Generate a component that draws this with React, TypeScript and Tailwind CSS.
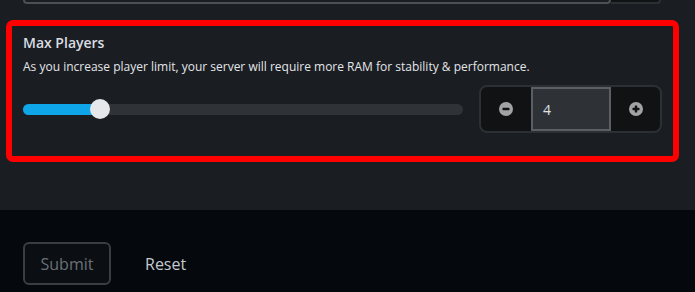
function MinusIcon() {
  return (
    <svg width="14" height="14" viewBox="0 0 14 14">
      <circle cx="7" cy="7" r="7" fill="#a3a3a3" />
      <rect x="3.5" y="5.8" width="7" height="2.4" rx="0.6" fill="#111214" />
    </svg>
  );
}

function PlusIcon() {
  return (
    <svg width="14" height="14" viewBox="0 0 14 14">
      <circle cx="7" cy="7" r="7" fill="#a3a3a3" />
      <rect x="3.5" y="5.8" width="7" height="2.4" rx="0.6" fill="#111214" />
      <rect x="5.8" y="3.5" width="2.4" height="7" rx="0.6" fill="#111214" />
    </svg>
  );
}

export default function App() {
  const value = 4;
  const pct = 17.5;

  return (
    <div
      className="w-[695px] h-[292px] overflow-hidden bg-[#05080c]"
      style={{ fontFamily: '"Open Sans", "Noto Sans", sans-serif' }}
    >
      <div className="h-[210px] bg-[#1a1d21] pt-0">
        {/* bottom edge of the field above */}
        <div className="flex pl-[23px]">
          <div className="w-[588px] h-[4px] border-x-2 border-b-2 border-[#4b5057] rounded-b-[4px]" />
          <div className="w-[50px] h-[4px] border-r-2 border-b-2 border-[#2c2f33] bg-[#111214] rounded-br-[6px]" />
        </div>

        <div className="mt-[16px] ml-[6px] w-[673px] h-[142px] border-[6px] border-[#ff0000] rounded-[7px] px-[11px] pt-[7px]">
          <div className="text-[14px] leading-[20px] font-semibold text-[#d9dde2]">
            Max Players
          </div>
          <p className="mt-[6px] text-[12px] leading-[16px] text-[#e3e6ea]">
            As you increase player limit, your server will require more RAM for stability &amp; performance.
          </p>

          <div className="mt-[10px] flex items-center gap-[16px]">
            <div className="relative w-[440px] h-[11px] rounded-full bg-[#2f3237]">
              <div
                className="absolute left-0 top-0 h-full rounded-full bg-[#0ea5e9]"
                style={{ width: `${pct}%` }}
              />
              <div
                className="absolute top-1/2 w-[20px] h-[20px] -translate-x-1/2 -translate-y-1/2 rounded-full bg-[#e5e7eb]"
                style={{ left: `${pct}%` }}
              />
            </div>

            <div className="flex w-[183px] h-[48px] rounded-lg border-2 border-[#2c2f33] bg-[#111214] overflow-hidden">
              <button className="w-[50px] flex items-center justify-center">
                <MinusIcon />
              </button>
              <div className="w-[80px] border-2 border-[#5b5f65] bg-[#2e3236] flex items-center pl-[10px] text-[14px] text-[#dde1e6]">
                {value}
              </div>
              <button className="flex-1 flex items-center justify-center">
                <PlusIcon />
              </button>
            </div>
          </div>
        </div>
      </div>

      <div className="flex items-center gap-[34px] pl-[23px] pt-[32px]">
        <button className="w-[88px] h-[43px] rounded-md border-2 border-[#3a3e44] bg-[#0b0f14] text-[16px] text-[#6b7076]">
          Submit
        </button>
        <button className="text-[16px] text-[#c5cad0]">Reset</button>
      </div>
    </div>
  );
}
